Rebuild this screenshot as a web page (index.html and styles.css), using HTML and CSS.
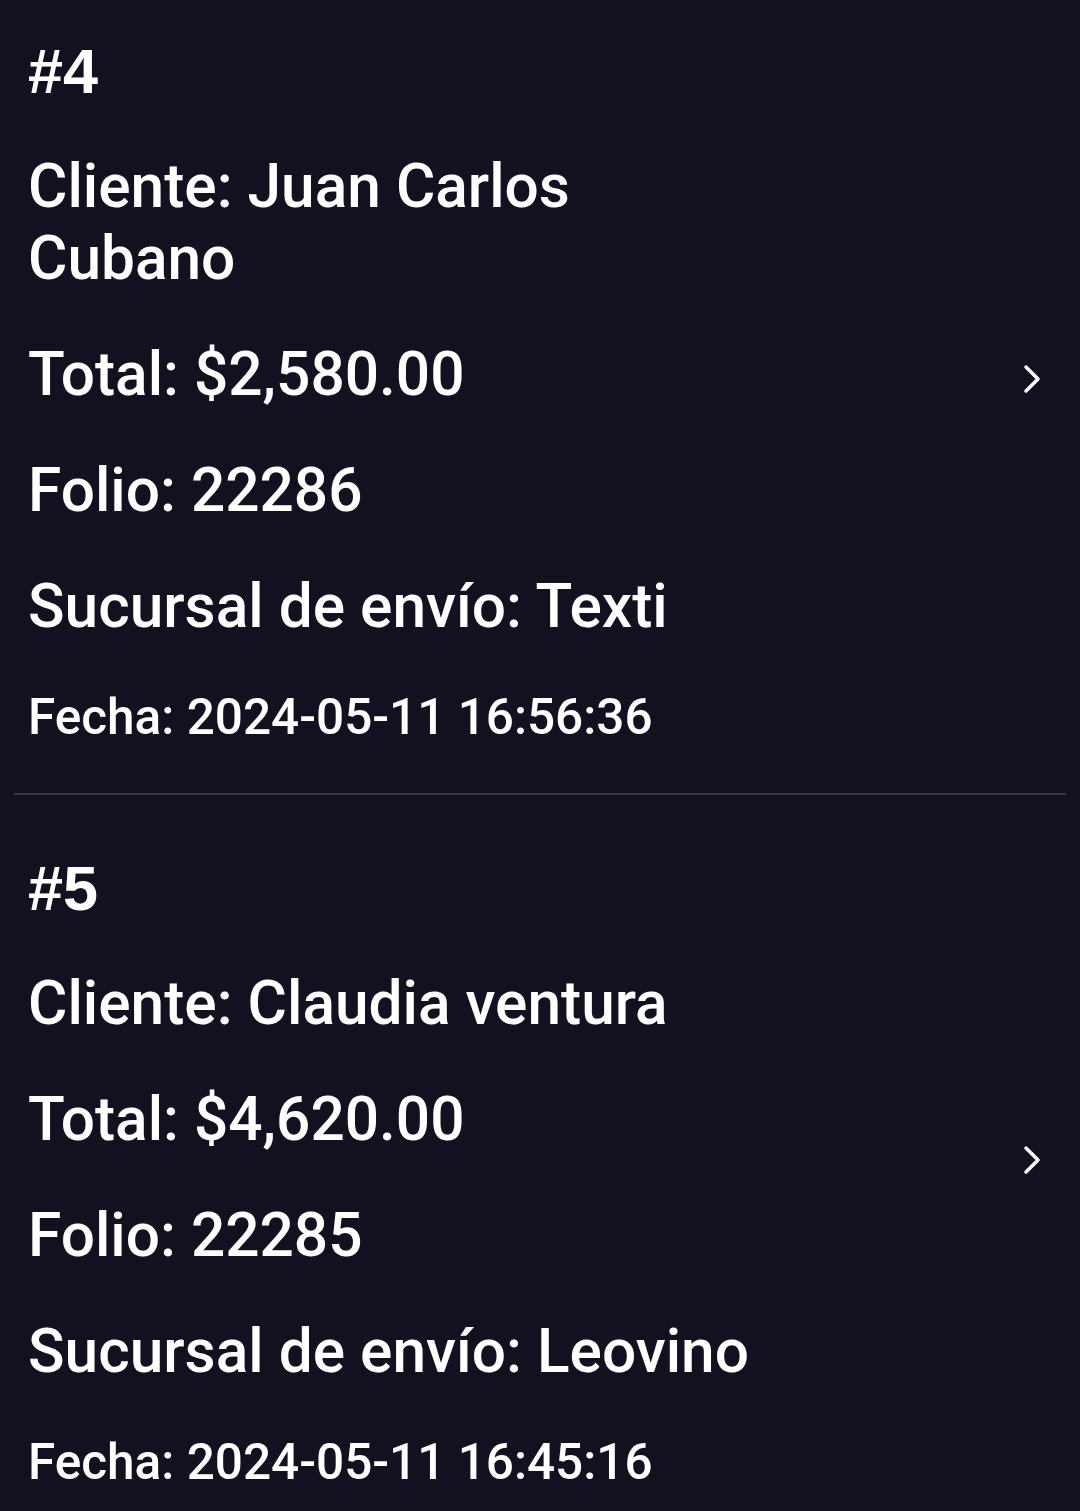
FILE: index.html
```html
<!DOCTYPE html>
<html lang="es">
<head>
<meta charset="utf-8">
<title>Pedidos</title>
<link rel="stylesheet" href="styles.css">
</head>
<body>
<div class="list">
  <div class="order">
    <div class="info">
      <div class="num">#4</div>
      <div class="line">Cliente: Juan Carlos Cubano</div>
      <div class="line">Total: $2,580.00</div>
      <div class="line">Folio: 22286</div>
      <div class="line">Sucursal de envío: Texti</div>
      <div class="date">Fecha: 2024-05-11 16:56:36</div>
    </div>
    <svg class="chev" width="20" height="32" viewBox="0 0 20 32"><polyline points="4,4 16,16 4,28" fill="none" stroke="#ffffff" stroke-width="3.5" stroke-linecap="round" stroke-linejoin="round"/></svg>
  </div>
  <hr class="divider">
  <div class="order">
    <div class="info">
      <div class="num">#5</div>
      <div class="line">Cliente: Claudia ventura</div>
      <div class="line">Total: $4,620.00</div>
      <div class="line">Folio: 22285</div>
      <div class="line">Sucursal de envío: Leovino</div>
      <div class="date">Fecha: 2024-05-11 16:45:16</div>
    </div>
    <svg class="chev" width="20" height="32" viewBox="0 0 20 32"><polyline points="4,4 16,16 4,28" fill="none" stroke="#ffffff" stroke-width="3.5" stroke-linecap="round" stroke-linejoin="round"/></svg>
  </div>
</div>
</body>
</html>
```
FILE: styles.css
```css
html, body {
  margin: 0;
  padding: 0;
  background: #12111f;
}
body {
  color: #ffffff;
  font-family: Roboto, "Noto Sans", sans-serif;
  overflow: hidden;
}
.list {
  margin-top: -22px;
}
.order {
  display: flex;
  align-items: center;
  padding: 57px 38px 46px 28px;
}
.info {
  width: 745px;
  display: flex;
  flex-direction: column;
  gap: 44px;
}
.num {
  font-family: "Liberation Sans", Arial, sans-serif;
  font-weight: 700;
  font-size: 63px;
  line-height: 72px;
}
.line {
  font-weight: 500;
  font-size: 60.4px;
  line-height: 72px;
}
.date {
  font-weight: 500;
  font-size: 49.5px;
  line-height: 60px;
}
.chev {
  margin-left: auto;
  margin-bottom: 24px;
  display: block;
}
.divider {
  margin: 0 14px;
  height: 2px;
  border: 0;
  background: #383845;
}
```
